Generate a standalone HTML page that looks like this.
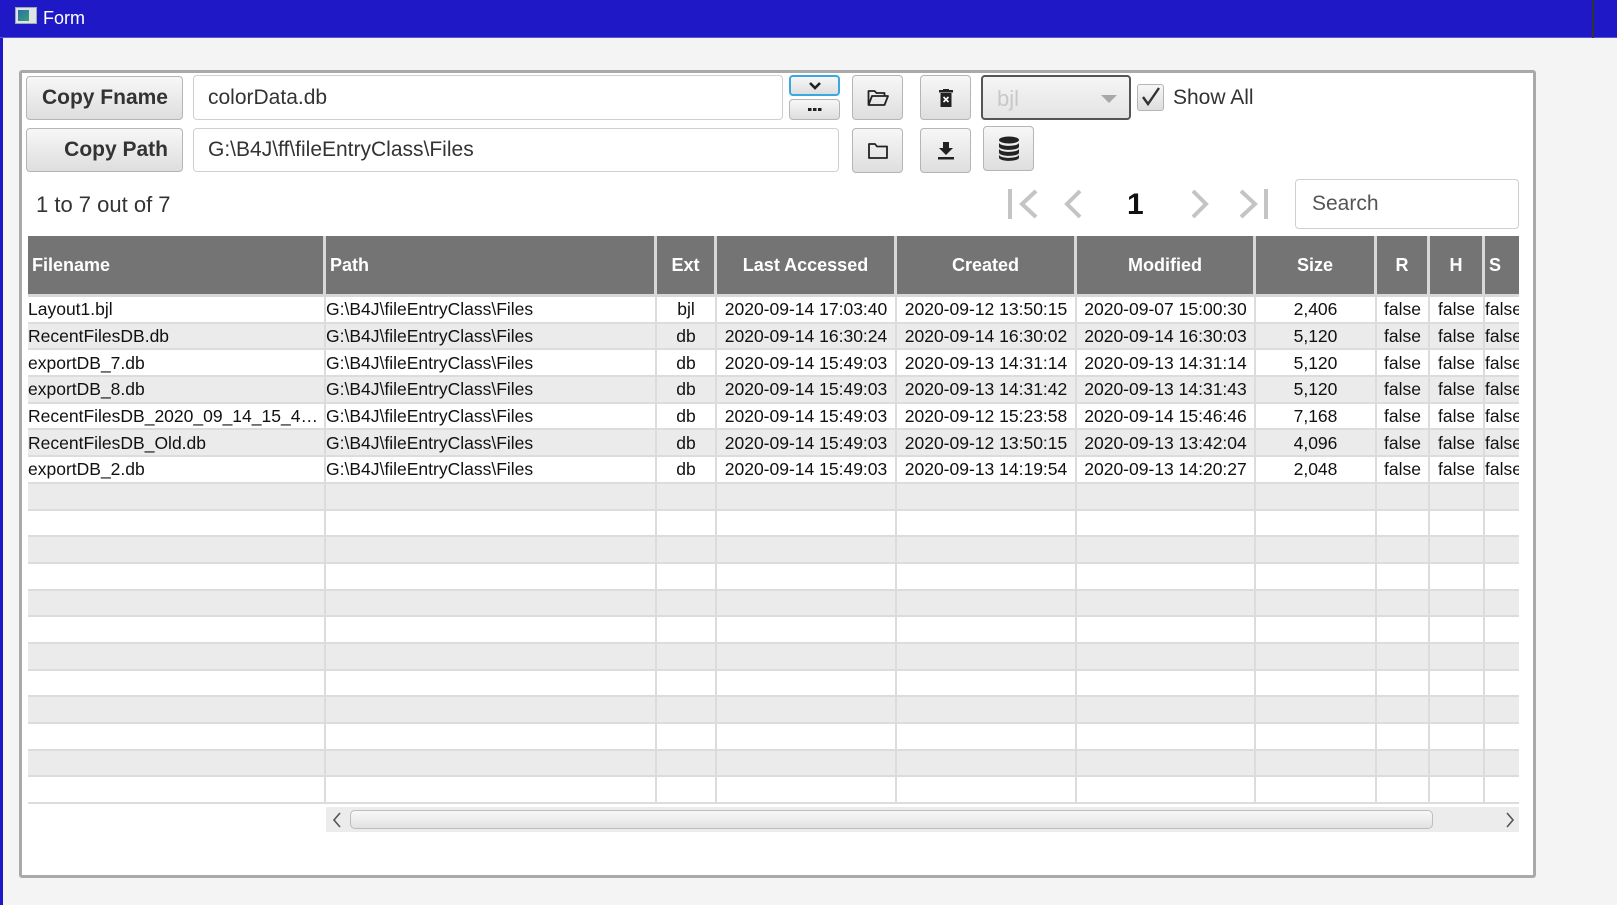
<!DOCTYPE html>
<html><head><meta charset="utf-8"><style>
*{box-sizing:border-box;margin:0;padding:0}
body{width:1617px;height:905px;background:#f4f4f4;position:relative;overflow:hidden;font-family:"Liberation Sans",sans-serif;color:#333}
.title{position:absolute;left:0;top:0;width:1617px;height:38px;background:#1f18c6;border-bottom:1px solid #5a55d0}
.title span{position:absolute;left:43px;top:8px;color:#fff;font-size:18px}
.ico{position:absolute;left:15px;top:7px;width:22px;height:17px;background:#dfe3e8;border:1px solid #9aa}
.ico i{position:absolute;left:2px;top:2px;width:11px;height:11px;background:linear-gradient(135deg,#2a6fb0,#3aa070)}
.rline{position:absolute;left:1592px;top:0;width:2px;height:38px;background:#333}
.lstrip{position:absolute;left:0;top:38px;width:3px;height:867px;background:#1f18c6}
.panel{position:absolute;left:19px;top:70px;width:1517px;height:808px;background:#fff;border:3px solid #a9a9a9;border-radius:3px}
.a{position:absolute}
.btn{position:absolute;background:linear-gradient(#f7f7f7,#dedede);border:1px solid #b5b5b5;border-radius:4px;display:flex;align-items:center;justify-content:center}
.tf{position:absolute;background:#fff;border:1px solid #cfcfcf;border-radius:4px;font-size:21px;padding-left:14px;display:flex;align-items:center;color:#333}
.bt{font-weight:bold;font-size:21px;color:#333;justify-content:flex-end;padding-right:14px}
.tbl{position:absolute;left:28px;top:236px;width:1491px;height:569px;overflow:hidden;background:#fff}
table{border-collapse:separate;border-spacing:0;table-layout:fixed;width:1530px;font-size:17.5px;color:#111}
th{background:#747474;color:#fff;height:61px;font-size:18px;border-right:3px solid #d8d8d8;border-bottom:3px solid #d8d8d8;text-align:center;font-weight:bold}
th.l{text-align:left;padding-left:4px}
td{height:26.7px;border-right:2px solid #dcdcdc;border-bottom:2px solid #dcdcdc;white-space:nowrap;overflow:hidden;text-overflow:ellipsis;text-align:center;padding:0 2px;line-height:24px}
td.l{text-align:left;padding-left:0}
td.c{text-overflow:clip}
tr:nth-child(odd) td{background:#ebebeb}
</style></head><body>
<div class="title"><div class="ico"><i></i></div><span>Form</span></div>
<div class="rline"></div>
<div class="lstrip"></div>
<div class="panel"></div>

<div class="btn bt" style="left:26px;top:76px;width:157px;height:44px">Copy Fname</div>
<div class="btn bt" style="left:26px;top:128px;width:157px;height:44px">Copy Path</div>
<div class="tf" style="left:193px;top:75px;width:590px;height:45px">colorData.db</div>
<div class="tf" style="left:193px;top:128px;width:646px;height:44px">G:\B4J\ff\fileEntryClass\Files</div>

<div class="btn" style="left:789px;top:75px;width:51px;height:21px;border:2px solid #39a7e0"><svg width="14" height="9" viewBox="0 0 14 9"><path d="M2 2l5 5 5-5" stroke="#222" stroke-width="2.6" fill="none"/></svg></div>
<div class="btn" style="left:789px;top:99px;width:51px;height:21px"><svg width="14" height="4"><rect x="0" y="0" width="3.5" height="3" fill="#222"/><rect x="5" y="0" width="3.5" height="3" fill="#222"/><rect x="10" y="0" width="3.5" height="3" fill="#222"/></svg></div>

<div class="btn" style="left:852px;top:75px;width:51px;height:45px"><svg width="22" height="18" viewBox="0 0 22 18"><path d="M1.5 16V2h6l2 2h8v3M1.5 16l3.5-9h16l-3.5 9z" stroke="#222" stroke-width="1.8" fill="none" stroke-linejoin="round"/></svg></div>
<div class="btn" style="left:920px;top:75px;width:51px;height:45px"><svg width="14" height="18" viewBox="0 0 14 18"><rect x="0" y="1" width="14" height="2.5" fill="#222"/><rect x="4" y="0" width="6" height="2" fill="#222"/><rect x="1.5" y="4" width="11" height="14" fill="#222"/><path d="M4.5 8l5 5M9.5 8l-5 5" stroke="#fff" stroke-width="1.6"/></svg></div>
<div class="a" style="left:981px;top:75px;width:150px;height:45px;border:2px solid #555;border-radius:4px;background:linear-gradient(#f5f5f5,#e4e4e4)"><span class="a" style="left:14px;top:9px;font-size:22px;color:#c8c8c8">bjl</span><svg class="a" style="left:118px;top:18px" width="16" height="9"><path d="M0 0h16L8 8z" fill="#a8a8a8"/></svg></div>
<div class="a" style="left:1137px;top:84px;width:27px;height:27px;border:1px solid #b5b5b5;border-radius:3px;background:linear-gradient(#f7f7f7,#dedede)"><svg width="25" height="25" viewBox="0 0 25 25"><path d="M5 12l5 7 11-16" stroke="#333" stroke-width="2.4" fill="none"/></svg></div>
<div class="a" style="left:1173px;top:86px;font-size:21px;color:#333">Show All</div>

<div class="btn" style="left:852px;top:128px;width:51px;height:45px"><svg width="20" height="16" viewBox="0 0 20 16"><path d="M1 15V1h6l2 2.5h10V15z" stroke="#222" stroke-width="1.8" fill="none" stroke-linejoin="round"/></svg></div>
<div class="btn" style="left:920px;top:128px;width:51px;height:45px"><svg width="16" height="18" viewBox="0 0 16 18"><path d="M5 0h6v6h4l-7 7-7-7h4z" fill="#222"/><rect x="0" y="15" width="16" height="2.5" fill="#222"/></svg></div>
<div class="btn" style="left:983px;top:126px;width:51px;height:45px"><svg width="22" height="26" viewBox="0 0 22 26"><ellipse cx="11" cy="4" rx="10" ry="3.5" fill="#222"/><path d="M1 6.5c0 4.5 20 4.5 20 0v4c0 4.5-20 4.5-20 0z" fill="#222"/><path d="M1 12.5c0 4.5 20 4.5 20 0v4c0 4.5-20 4.5-20 0z" fill="#222"/><path d="M1 18.5c0 4.5 20 4.5 20 0v3c0 4.5-20 4.5-20 0z" fill="#222"/></svg></div>

<div class="a" style="left:36px;top:192px;font-size:22px;color:#333">1 to 7 out of 7</div>
<svg class="a" style="left:1008px;top:189px" width="34" height="30"><rect x="0" y="0" width="4" height="30" fill="#c4c4c4"/><path d="M28 2L14 15l14 13" stroke="#c4c4c4" stroke-width="4" fill="none"/></svg>
<svg class="a" style="left:1063px;top:189px" width="20" height="30"><path d="M17 2L4 15l13 13" stroke="#c4c4c4" stroke-width="4" fill="none"/></svg>
<div class="a" style="left:1127px;top:188px;font-size:30px;font-weight:bold;color:#111">1</div>
<svg class="a" style="left:1190px;top:189px" width="20" height="30"><path d="M3 2l13 13L3 28" stroke="#c4c4c4" stroke-width="4" fill="none"/></svg>
<svg class="a" style="left:1238px;top:189px" width="34" height="30"><path d="M3 2l14 13L3 28" stroke="#c4c4c4" stroke-width="4" fill="none"/><rect x="26" y="0" width="4" height="30" fill="#c4c4c4"/></svg>
<div class="tf" style="left:1295px;top:179px;width:224px;height:50px;color:#555;padding-left:16px">Search</div>

<div class="tbl"><table>
<colgroup><col style="width:298px"><col style="width:331px"><col style="width:60px"><col style="width:180px"><col style="width:180px"><col style="width:179px"><col style="width:121px"><col style="width:53px"><col style="width:55px"><col style="width:73px"></colgroup>
<tr><th class="l">Filename</th><th class="l">Path</th><th>Ext</th><th>Last Accessed</th><th>Created</th><th>Modified</th><th>Size</th><th>R</th><th>H</th><th class="l">S</th></tr>
<tr><td class="l">Layout1.bjl</td><td class="l">G:\B4J\fileEntryClass\Files</td><td>bjl</td><td>2020-09-14 17:03:40</td><td>2020-09-12 13:50:15</td><td>2020-09-07 15:00:30</td><td>2,406</td><td>false</td><td>false</td><td class="l c">false</td></tr>
<tr><td class="l">RecentFilesDB.db</td><td class="l">G:\B4J\fileEntryClass\Files</td><td>db</td><td>2020-09-14 16:30:24</td><td>2020-09-14 16:30:02</td><td>2020-09-14 16:30:03</td><td>5,120</td><td>false</td><td>false</td><td class="l c">false</td></tr>
<tr><td class="l">exportDB_7.db</td><td class="l">G:\B4J\fileEntryClass\Files</td><td>db</td><td>2020-09-14 15:49:03</td><td>2020-09-13 14:31:14</td><td>2020-09-13 14:31:14</td><td>5,120</td><td>false</td><td>false</td><td class="l c">false</td></tr>
<tr><td class="l">exportDB_8.db</td><td class="l">G:\B4J\fileEntryClass\Files</td><td>db</td><td>2020-09-14 15:49:03</td><td>2020-09-13 14:31:42</td><td>2020-09-13 14:31:43</td><td>5,120</td><td>false</td><td>false</td><td class="l c">false</td></tr>
<tr><td class="l">RecentFilesDB_2020_09_14_15_46_4...</td><td class="l">G:\B4J\fileEntryClass\Files</td><td>db</td><td>2020-09-14 15:49:03</td><td>2020-09-12 15:23:58</td><td>2020-09-14 15:46:46</td><td>7,168</td><td>false</td><td>false</td><td class="l c">false</td></tr>
<tr><td class="l">RecentFilesDB_Old.db</td><td class="l">G:\B4J\fileEntryClass\Files</td><td>db</td><td>2020-09-14 15:49:03</td><td>2020-09-12 13:50:15</td><td>2020-09-13 13:42:04</td><td>4,096</td><td>false</td><td>false</td><td class="l c">false</td></tr>
<tr><td class="l">exportDB_2.db</td><td class="l">G:\B4J\fileEntryClass\Files</td><td>db</td><td>2020-09-14 15:49:03</td><td>2020-09-13 14:19:54</td><td>2020-09-13 14:20:27</td><td>2,048</td><td>false</td><td>false</td><td class="l c">false</td></tr>
<tr><td></td><td></td><td></td><td></td><td></td><td></td><td></td><td></td><td></td><td></td></tr>
<tr><td></td><td></td><td></td><td></td><td></td><td></td><td></td><td></td><td></td><td></td></tr>
<tr><td></td><td></td><td></td><td></td><td></td><td></td><td></td><td></td><td></td><td></td></tr>
<tr><td></td><td></td><td></td><td></td><td></td><td></td><td></td><td></td><td></td><td></td></tr>
<tr><td></td><td></td><td></td><td></td><td></td><td></td><td></td><td></td><td></td><td></td></tr>
<tr><td></td><td></td><td></td><td></td><td></td><td></td><td></td><td></td><td></td><td></td></tr>
<tr><td></td><td></td><td></td><td></td><td></td><td></td><td></td><td></td><td></td><td></td></tr>
<tr><td></td><td></td><td></td><td></td><td></td><td></td><td></td><td></td><td></td><td></td></tr>
<tr><td></td><td></td><td></td><td></td><td></td><td></td><td></td><td></td><td></td><td></td></tr>
<tr><td></td><td></td><td></td><td></td><td></td><td></td><td></td><td></td><td></td><td></td></tr>
<tr><td></td><td></td><td></td><td></td><td></td><td></td><td></td><td></td><td></td><td></td></tr>
<tr><td></td><td></td><td></td><td></td><td></td><td></td><td></td><td></td><td></td><td></td></tr>
</table></div>

<div class="a" style="left:326px;top:807px;width:1193px;height:25px;background:#ececec"></div>
<svg class="a" style="left:331px;top:812px" width="12" height="16"><path d="M9 1L3 8l6 7" stroke="#555" stroke-width="1.6" fill="none"/></svg>
<div class="a" style="left:350px;top:810px;width:1083px;height:19px;border:1px solid #bdbdbd;border-radius:5px;background:linear-gradient(#f8f8f8,#e2e2e2)"></div>
<svg class="a" style="left:1504px;top:812px" width="12" height="16"><path d="M3 1l6 7-6 7" stroke="#555" stroke-width="1.6" fill="none"/></svg>
</body></html>
